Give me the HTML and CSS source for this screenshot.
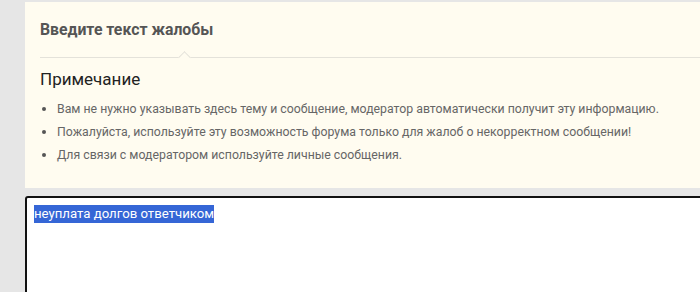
FILE: index.html
```html
<!DOCTYPE html>
<html lang="ru">
<head>
	<meta charset="UTF-8">
	<title>Жалоба на сообщение</title>
	<link rel="stylesheet" href="styles.css">
</head>
<body>
	<div class="report">
		<div class="report-box">
			<h3 class="report-title">Введите текст жалобы</h3>
			<div class="report-sep"></div>
			<h4 class="note-title">Примечание</h4>
			<ul class="note-list">
				<li>Вам не нужно указывать здесь тему и сообщение, модератор автоматически получит эту информацию.</li>
				<li>Пожалуйста, используйте эту возможность форума только для жалоб о некорректном сообщении!</li>
				<li>Для связи с модератором используйте личные сообщения.</li>
			</ul>
		</div>
		<div class="report-input"><span class="selected">неуплата долгов ответчиком</span></div>
	</div>
</body>
</html>
```

FILE: styles.css
```css
body {
	margin: 0;
	background-color: #e6e6e6;
	font-family: Roboto, "Liberation Sans", sans-serif;
	overflow: hidden;
}
.report {
	padding: 2px 0 0 25px;
	margin-right: -20px;
	display: flex;
	flex-direction: column;
	gap: 8px;
}
.report-box {
	background-color: #fffcf0;
	padding: 0 0 22px 15px;
}
.report-title {
	margin: 0;
	height: 55px;
	display: flex;
	align-items: center;
	font-size: 15.8px;
	font-weight: 700;
	color: #555;
}
.report-sep {
	height: 0;
	border-top: 1px solid #e4e2da;
	position: relative;
}
.report-sep::after {
	content: '';
	position: absolute;
	left: 140px;
	top: -5px;
	width: 8px;
	height: 8px;
	background-color: #fffcf0;
	border-top: 1px solid #e4e2da;
	border-left: 1px solid #e4e2da;
	transform: rotate(45deg);
}
.note-title {
	margin: 10px 0 0;
	font-size: 17px;
	font-weight: 400;
	color: #222;
	line-height: 22px;
}
.note-list {
	margin: 7px 0 0;
	padding: 0 0 0 17px;
	font-size: 12.3px;
	line-height: 23px;
	color: #666;
}
.note-list li {
	height: 23px;
}
.note-list li::marker {
	color: #555;
	font-size: 13px;
}
.report-input {
	background-color: #fff;
	border: 2px solid #111;
	border-radius: 3px;
	height: 120px;
	padding: 7px 7px;
	font-size: 13.2px;
	line-height: 18px;
	color: #222;
}
.selected {
	display: inline-block;
	background-color: #3566d6;
	color: #fff;
}
```
